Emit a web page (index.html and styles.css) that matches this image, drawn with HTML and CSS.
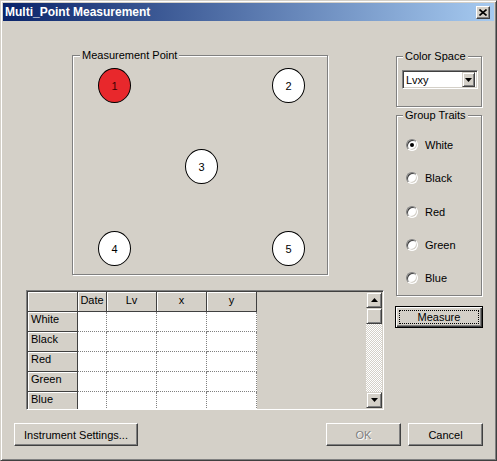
FILE: index.html
```html
<!DOCTYPE html>
<html>
<head>
<meta charset="utf-8">
<title>Multi_Point Measurement</title>
<link rel="stylesheet" href="styles.css">
</head>
<body>
<div class="window">
  <div class="titlebar">
    <span class="title">Multi_Point Measurement</span>
    <button class="close" aria-label="Close">
      <svg width="8" height="7" viewBox="0 0 8 7"><path d="M0.5 0.5L7.5 6.5M7.5 0.5L0.5 6.5" stroke="#000" stroke-width="1.6" fill="none"/></svg>
    </button>
  </div>
  <div class="content">
    <div class="main">
      <div class="left">
        <div class="group mp">
          <span class="legend">Measurement Point</span>
          <div class="pt p1 active">1</div>
          <div class="pt p2">2</div>
          <div class="pt p3">3</div>
          <div class="pt p4">4</div>
          <div class="pt p5">5</div>
        </div>
        <div class="gridbox">
          <div class="cells" role="grid">
            <div class="hc corner"></div>
            <div class="hc">Date</div>
            <div class="hc">Lv</div>
            <div class="hc">x</div>
            <div class="hc">y</div>

            <div class="rh">White</div>
            <div class="dc"></div><div class="dc"></div><div class="dc"></div><div class="dc"></div>
            <div class="rh">Black</div>
            <div class="dc"></div><div class="dc"></div><div class="dc"></div><div class="dc"></div>
            <div class="rh">Red</div>
            <div class="dc"></div><div class="dc"></div><div class="dc"></div><div class="dc"></div>
            <div class="rh">Green</div>
            <div class="dc"></div><div class="dc"></div><div class="dc"></div><div class="dc"></div>
            <div class="rh">Blue</div>
            <div class="dc"></div><div class="dc"></div><div class="dc"></div><div class="dc"></div>
          </div>
          <div class="filler"></div>
          <div class="vscroll">
            <div class="sb-btn">
              <svg width="7" height="4" viewBox="0 0 7 4"><path d="M3.5 0L7 4H0Z" fill="#000"/></svg>
            </div>
            <div class="sb-thumb"></div>
            <div class="sb-track"></div>
            <div class="sb-btn">
              <svg width="7" height="4" viewBox="0 0 7 4"><path d="M0 0H7L3.5 4Z" fill="#000"/></svg>
            </div>
          </div>
        </div>
      </div>
      <div class="right">
        <div class="group cs">
          <span class="legend">Color Space</span>
          <div class="combo">
            <span class="combo-text">Lvxy</span>
            <span class="combo-btn">
              <svg width="7" height="4" viewBox="0 0 7 4"><path d="M0 0H7L3.5 4Z" fill="#000"/></svg>
            </span>
          </div>
        </div>
        <div class="group gt">
          <span class="legend">Group Traits</span>
          <label class="radio-row"><span class="radio checked"></span>White</label>
          <label class="radio-row"><span class="radio"></span>Black</label>
          <label class="radio-row"><span class="radio"></span>Red</label>
          <label class="radio-row"><span class="radio"></span>Green</label>
          <label class="radio-row"><span class="radio"></span>Blue</label>
        </div>
        <button class="btn measure"><span class="focus">Measure</span></button>
      </div>
    </div>
    <div class="footer">
      <button class="btn inst">Instrument Settings...</button>
      <div class="footer-right">
        <button class="btn ok" disabled>OK</button>
        <button class="btn cancel">Cancel</button>
      </div>
    </div>
  </div>
</div>
</body>
</html>
```
FILE: styles.css
```css
* { box-sizing: border-box; }
html, body { margin: 0; padding: 0; }
body {
  background: #d4d0c8;
  font-family: "Liberation Sans", Arial, sans-serif;
  font-size: 11px;
  color: #000;
}
button {
  font: inherit;
  margin: 0;
  padding: 0;
  color: #000;
  background: #d4d0c8;
}

.window {
  width: 497px;
  height: 461px;
  background: #d4d0c8;
  border: 1px solid;
  border-color: #d4d0c8 #404040 #404040 #d4d0c8;
  box-shadow: inset 1px 1px #fff, inset -1px -1px #808080;
  padding: 2px;
}

.titlebar {
  height: 18px;
  background: linear-gradient(to right, #0a246a, #a6caf0);
  display: flex;
  align-items: center;
  justify-content: space-between;
  padding: 0 4px 0 2px;
}
.title {
  color: #fff;
  font-weight: bold;
  font-size: 12px;
  line-height: 18px;
}
.close {
  width: 14px;
  height: 13px;
  display: flex;
  align-items: center;
  justify-content: center;
  border: 1px solid;
  border-color: #fff #404040 #404040 #fff;
  box-shadow: inset -1px -1px #808080;
}

.content {
  padding: 34px 11px 0 11px;
}
.main {
  display: flex;
  gap: 11px;
  padding-left: 12px;
}
.left { width: 358px; }
.right {
  width: 88px;
  display: flex;
  flex-direction: column;
}

.group {
  position: relative;
  border: 1px solid #808080;
  box-shadow: inset 1px 1px #fff, 1px 1px #fff;
}
.legend {
  position: absolute;
  top: -7px;
  left: 7px;
  padding: 0 2px;
  line-height: 13px;
  background: #d4d0c8;
  white-space: nowrap;
}
.cs .legend, .gt .legend { left: 6px; }

.mp {
  margin-left: 46px;
  width: 256px;
  height: 220px;
}
.pt {
  position: absolute;
  width: 33px;
  height: 35px;
  border-radius: 50%;
  border: 1px solid #000;
  background: #fff;
  display: flex;
  align-items: center;
  justify-content: center;
}
.pt.active { background: #e8282c; color: #3a0000; }
.p1 { left: 25px; top: 12px; }
.p2 { left: 199px; top: 12px; }
.p3 { left: 112px; top: 93px; }
.p4 { left: 25px; top: 175px; }
.p5 { left: 199px; top: 175px; }

.gridbox {
  margin-top: 15px;
  height: 120px;
  display: flex;
  border: 1px solid;
  border-color: #808080 #fff #fff #808080;
  box-shadow: inset 1px 1px #404040, inset -1px -1px #d4d0c8;
  padding: 1px;
  overflow: hidden;
}
.cells {
  display: grid;
  grid-template-columns: 50px 29px 50px 50px 50px;
  grid-auto-rows: 20px;
  align-self: flex-start;
}
.hc, .rh {
  background: #d4d0c8;
  border-right: 1px solid #404040;
  border-bottom: 1px solid #404040;
  box-shadow: inset 1px 1px #fff;
  white-space: nowrap;
  overflow: hidden;
}
.hc { text-align: center; line-height: 17px; }
.rh { padding-left: 3px; line-height: 15px; }
.dc {
  background: #fff;
  border-right: 1px dotted #808080;
  border-bottom: 1px dotted #808080;
}
.filler { flex: 1; }
.vscroll {
  width: 16px;
  display: flex;
  flex-direction: column;
}
.sb-btn, .sb-thumb, .combo-btn {
  border: 1px solid;
  border-color: #d4d0c8 #404040 #404040 #d4d0c8;
  box-shadow: inset 1px 1px #fff, inset -1px -1px #808080;
  background: #d4d0c8;
}
.sb-btn {
  height: 16px;
  display: flex;
  align-items: center;
  justify-content: center;
}
.sb-thumb { height: 16px; }
.sb-track {
  flex: 1;
  background: repeating-conic-gradient(#d4d0c8 0 25%, #fff 0 50%) 0 0 / 2px 2px;
}

.cs {
  margin: 1px 1px 0;
  height: 51px;
  padding: 13px 0 0 5px;
}
.combo {
  width: 76px;
  height: 19px;
  display: flex;
  align-items: center;
  background: #fff;
  border: 1px solid;
  border-color: #808080 #fff #fff #808080;
  box-shadow: inset 1px 1px #404040, inset -1px -1px #d4d0c8;
  padding: 2px;
}
.combo-text { flex: 1; padding-left: 1px; }
.combo-btn {
  width: 13px;
  height: 15px;
  display: flex;
  align-items: center;
  justify-content: center;
}

.gt {
  margin: 8px 1px 0;
  height: 181px;
  padding: 12px 0 0 9px;
  display: flex;
  flex-direction: column;
}
.radio-row {
  height: 33.5px;
  display: flex;
  align-items: center;
  gap: 7px;
}
.radio {
  width: 12px;
  height: 12px;
  border-radius: 50%;
  background: #fff;
  border: 1px solid;
  border-color: #808080 #fff #fff #808080;
  box-shadow: inset 1px 1px #404040, inset -1px -1px #d4d0c8;
  display: flex;
  align-items: center;
  justify-content: center;
}
.radio.checked::after {
  content: "";
  width: 4px;
  height: 4px;
  border-radius: 50%;
  background: #000;
}

.btn {
  height: 23px;
  border: 1px solid;
  border-color: #fff #404040 #404040 #fff;
  box-shadow: inset -1px -1px #808080;
}
.measure {
  margin-top: 10px;
  width: 88px;
  height: 22px;
  border: 1px solid #000;
  box-shadow: inset 1px 1px #fff, inset -1px -1px #404040, inset -2px -2px #808080;
  padding: 3px;
  display: flex;
}
.focus {
  flex: 1;
  border: 1px dotted #000;
  display: flex;
  align-items: center;
  justify-content: center;
}

.footer {
  margin-top: 13px;
  display: flex;
  justify-content: space-between;
}
.footer-right { display: flex; gap: 7px; }
.inst { width: 124px; }
.ok, .cancel { width: 75px; }
.ok { color: #808080; text-shadow: 1px 1px #fff; }
```
